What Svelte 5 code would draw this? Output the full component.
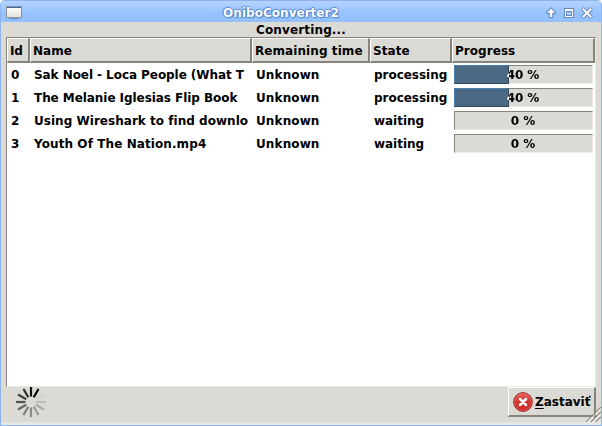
<script>
  const columns = [
    { title: 'Id', tracking: -0.3 },
    { title: 'Name', tracking: 0 },
    { title: 'Remaining time', tracking: 0.08 },
    { title: 'State', tracking: 0.1 },
    { title: 'Progress', tracking: 0.05 }
  ];
  const jobs = [
    { id: 0, name: 'Sak Noel - Loca People (What T', tracking: -0.06, remaining: 'Unknown', state: 'processing', progress: 40 },
    { id: 1, name: 'The Melanie Iglesias Flip Book', tracking: -0.06, remaining: 'Unknown', state: 'processing', progress: 40 },
    { id: 2, name: 'Using Wireshark to find downlo', tracking: 0.03, remaining: 'Unknown', state: 'waiting', progress: 0 },
    { id: 3, name: 'Youth Of The Nation.mp4', tracking: 0.09, remaining: 'Unknown', state: 'waiting', progress: 0 }
  ];
  const spokes = ['#101010', '#000000', '#d4d3cf', '#bdbcb8', '#aaa9a5', '#989793', '#8a8985', '#7c7b78', '#686765', '#555452', '#40403f', '#2c2c2b'];
</script>

<div class="window">
  <header class="titlebar">
    <svg class="appicon" width="16" height="14" viewBox="0 0 16 14">
      <defs>
        <linearGradient id="paper" x1="0" y1="0" x2="0" y2="1">
          <stop offset="0" stop-color="#ffffff" />
          <stop offset="1" stop-color="#e3e3dc" />
        </linearGradient>
      </defs>
      <ellipse cx="8" cy="12" rx="5.5" ry="1.6" fill="#6c9ad6" />
      <rect x="0.5" y="0.5" width="15" height="11" fill="url(#paper)" stroke="#8c9298" />
      <rect x="1" y="1" width="14" height="1" fill="#3a6ba8" />
    </svg>
    <h1>OniboConverter2</h1>
    <div class="controls">
      <svg width="12" height="12" viewBox="0 0 12 12">
        <path d="M6 1.5 L10 5.7 H7.2 V10 H4.8 V5.7 H2 Z" fill="#fff" stroke="#6288bd" stroke-width="2.2" stroke-linejoin="round" />
        <path d="M6 1.5 L10 5.7 H7.2 V10 H4.8 V5.7 H2 Z" fill="#fff" />
      </svg>
      <svg width="12" height="12" viewBox="0 0 12 12">
        <rect x="1.5" y="1.5" width="9" height="9" fill="#fff" stroke="#6288bd" />
        <rect x="3.5" y="4.5" width="5" height="4" fill="#a5cbff" stroke="#6288bd" />
      </svg>
      <svg width="12" height="12" viewBox="0 0 12 12" stroke-linecap="square">
        <path d="M2.8 2.8 L9.2 9.2 M9.2 2.8 L2.8 9.2" stroke="#6288bd" stroke-width="4" />
        <path d="M2.5 2.5 L9.5 9.5 M9.5 2.5 L2.5 9.5" stroke="#fff" stroke-width="2" />
      </svg>
    </div>
  </header>

  <p class="status">Converting...</p>

  <section class="tree">
    <div class="row head">
      {#each columns as column}
        <div class="th" style="letter-spacing: {column.tracking}px">{column.title}</div>
      {/each}
    </div>
    {#each jobs as job}
      <div class="row">
        <div class="td">{job.id}</div>
        <div class="td" style="letter-spacing: {job.tracking}px">{job.name}</div>
        <div class="td remaining">{job.remaining}</div>
        <div class="td state">{job.state}</div>
        <div class="bar">
          {#if job.progress > 0}
            <div class="fill" style="width: {job.progress}%"></div>
          {/if}
          <span class="label" style="--done: {job.progress}%">{job.progress} %</span>
        </div>
      </div>
    {/each}
  </section>

  <footer>
    <svg class="spinner" width="32" height="32" viewBox="-16 -16 32 32">
      {#each spokes as color, i}
        <line x1="0" y1="-5.5" x2="0" y2="-15" stroke={color} stroke-width="2.2" transform="rotate({i * 30})" />
      {/each}
    </svg>
    <button>
      <svg width="20" height="20" viewBox="0 0 20 20">
        <defs>
          <linearGradient id="red" x1="0" y1="0" x2="0" y2="1">
            <stop offset="0" stop-color="#e8645c" />
            <stop offset="0.5" stop-color="#cf3330" />
            <stop offset="1" stop-color="#d02a28" />
          </linearGradient>
        </defs>
        <circle cx="10" cy="10" r="9.4" fill="url(#red)" stroke="#9c2f2a" />
        <circle cx="10" cy="10" r="8.4" fill="none" stroke="#f08a80" stroke-opacity="0.4" />
        <path d="M7 7 L13 13 M13 7 L7 13" stroke="#fff" stroke-width="2.5" stroke-linecap="round" />
      </svg>
      <span><u>Z</u>astaviť</span>
    </button>
    <svg class="grip" width="15" height="15" viewBox="0 0 15 15">
      <path d="M0 15 L15 0 M5 15 L15 5 M10 15 L15 10" stroke="#86837a" stroke-width="1.2" />
      <path d="M1.5 15 L15 1.5 M6.5 15 L15 6.5 M11.5 15 L15 11.5" stroke="#fff" stroke-width="1" />
    </svg>
  </footer>
</div>

<style>
  :global(body) {
    margin: 0;
    background: #fff;
  }
  .window {
    box-sizing: border-box;
    width: 602px;
    height: 426px;
    display: flex;
    flex-direction: column;
    border: 1px solid #8db4ee;
    border-top: 0;
    border-radius: 5px 5px 0 0;
    overflow: hidden;
    background: #dcdad5;
    color: #000;
    font: bold 12px/14px "DejaVu Sans", sans-serif;
  }
  .titlebar {
    box-sizing: border-box;
    flex: none;
    height: 22px;
    display: grid;
    grid-template-columns: 20px 1fr 60px;
    align-items: center;
    border-top: 1px solid #8db4ee;
    background: linear-gradient(#b4d3ff, #96c2ff 60%, #94c0ff);
  }
  .appicon {
    margin: 2px 0 0 5px;
  }
  h1 {
    margin: 3px 0 0;
    font: inherit;
    letter-spacing: 0.03px;
    text-align: center;
    color: #fff;
    text-shadow: 0 0 1px #3f74bd, 1px 1px 1px #4d80c6, -1px 0 1px #5c8dd0, 0 -1px 1px #5c8dd0;
  }
  .controls {
    display: flex;
    gap: 6px;
    padding: 2px 0 0 4px;
  }
  .status {
    flex: none;
    height: 15px;
    margin: 0;
    line-height: 16px;
    letter-spacing: 0.14px;
    text-align: center;
    white-space: nowrap;
  }
  .tree {
    box-sizing: border-box;
    flex: none;
    height: 350px;
    margin: 0 5px;
    border: 1px solid;
    border-color: #86837a #eeebe7 #eeebe7 #86837a;
    background: #fff;
  }
  .row {
    display: grid;
    grid-template-columns: 23px 222px 118px 82px 143px;
    height: 23px;
  }
  .head {
    height: 25px;
    margin-bottom: 1px;
  }
  .th {
    box-sizing: border-box;
    padding: 5px 0 0 2px;
    border: solid;
    border-width: 1px 2px 2px 1px;
    border-color: #fff #86837a #86837a #fff;
    background: #dcdad5;
    white-space: nowrap;
  }
  .td {
    padding: 4px 0 0 4px;
    overflow: hidden;
    white-space: nowrap;
  }
  .remaining {
    letter-spacing: 0.12px;
  }
  .state {
    letter-spacing: -0.03px;
  }
  .bar {
    position: relative;
    box-sizing: border-box;
    width: 139px;
    height: 19px;
    margin: 1px 0 0 2px;
    border: 1px solid;
    border-color: #86837a #eeebe7 #eeebe7 #86837a;
    background: #dcdad5;
  }
  .fill {
    position: absolute;
    box-sizing: border-box;
    top: -1px;
    left: -1px;
    height: 19px;
    border: 1px solid;
    border-color: #4a80ad #33485c #33485c #4a80ad;
    background: #4b6983;
  }
  .label {
    position: relative;
    display: block;
    width: 136px;
    line-height: 18px;
    letter-spacing: -0.1px;
    text-align: center;
    color: transparent;
    background: linear-gradient(to right, #fff var(--done), #000 var(--done));
    -webkit-background-clip: text;
    background-clip: text;
  }
  footer {
    position: relative;
    flex: 1;
    display: flex;
    justify-content: space-between;
    align-items: flex-start;
    padding: 0 5px 0 14px;
    background: linear-gradient(#dcdad5 35px, #e6e6e6 35px);
  }
  .spinner {
    margin-top: -1px;
  }
  button {
    box-sizing: border-box;
    width: 88px;
    height: 30px;
    display: flex;
    align-items: center;
    gap: 2px;
    padding: 0 0 0 4px;
    border: solid;
    border-width: 1px 2px 2px 1px;
    border-color: #fff #86837a #86837a #fff;
    background: #dcdad5;
    color: #000;
    font: inherit;
    white-space: nowrap;
  }
  u {
    text-underline-offset: 2px;
  }
  .grip {
    position: absolute;
    right: 0;
    bottom: 3px;
  }
</style>
